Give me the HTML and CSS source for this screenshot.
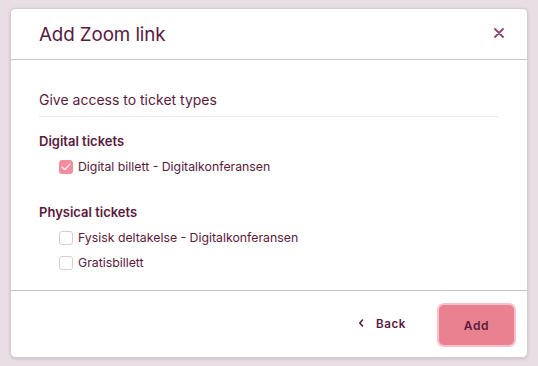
FILE: index.html
```html
<!DOCTYPE html>
<html>
<head>
<meta charset="utf-8">
<link rel="stylesheet" href="styles.css">
</head>
<body>
<div class="backdrop">
  <div class="modal">
    <div class="modal-header">
      <h1 class="title">Add Zoom link</h1>
      <button class="close" aria-label="Close">
        <svg width="10" height="10" viewBox="0 0 10 10"><path d="M1 1L9 9M9 1L1 9" stroke="#8a4571" stroke-width="1.8" stroke-linecap="round"/></svg>
      </button>
    </div>
    <div class="modal-body">
      <div class="section-title">Give access to ticket types</div>
      <div class="group">
        <div class="group-title">Digital tickets</div>
        <label class="option">
          <span class="box checked">
            <svg width="10" height="8" viewBox="0 0 10 8"><path d="M1 4.2L3.8 6.6L9 1.2" fill="none" stroke="#fff" stroke-width="1.2" stroke-linecap="round" stroke-linejoin="round"/></svg>
          </span>
          <span>Digital billett - Digitalkonferansen</span>
        </label>
      </div>
      <div class="group group-2">
        <div class="group-title">Physical tickets</div>
        <label class="option">
          <span class="box"></span>
          <span>Fysisk deltakelse - Digitalkonferansen</span>
        </label>
        <label class="option">
          <span class="box"></span>
          <span>Gratisbillett</span>
        </label>
      </div>
    </div>
    <div class="modal-footer">
      <button class="back">
        <svg width="6" height="8" viewBox="0 0 6 8"><path d="M4.5 1L1.8 4L4.5 7" fill="none" stroke="#5a1a3e" stroke-width="1.6" stroke-linecap="round" stroke-linejoin="round"/></svg>
        <span>Back</span>
      </button>
      <button class="add">Add</button>
    </div>
  </div>
</div>
</body>
</html>
```
FILE: styles.css
```css
* { box-sizing: border-box; }
html, body { margin: 0; padding: 0; }
body {
  width: 538px;
  height: 366px;
  overflow: hidden;
  background: #e8dee4;
  font-family: Inter, "Noto Sans", sans-serif;
  color: #5a1a3e;
}
.backdrop {
  padding: 8px 10px;
}
.modal {
  width: 518px;
  height: 350px;
  background: #fff;
  border-radius: 5px;
  border: 1px solid #d2cbcf;
  box-shadow: 0 1px 3px rgba(90, 40, 70, 0.18);
  display: flex;
  flex-direction: column;
}
.modal-header {
  height: 51px;
  border-bottom: 1px solid #c9c5c7;
  display: flex;
  align-items: center;
  justify-content: space-between;
  padding: 0 22px 0 28px;
}
.title {
  margin: 0;
  font-size: 18.8px;
  font-weight: 400;
  letter-spacing: -0.1px;
  color: #5a1a3e;
  padding-top: 1px;
}
.close {
  border: 0;
  background: none;
  padding: 0;
  width: 12px;
  height: 12px;
  display: flex;
  align-items: center;
  justify-content: center;
  margin-top: -3px;
}
.modal-body {
  flex: 1;
  padding: 31px 28px 0 28px;
  border-bottom: 1px solid #c9c5c7;
}
.section-title {
  font-size: 14px;
  font-weight: 400;
  padding-bottom: 8px;
  border-bottom: 1px solid #ececec;
  margin-bottom: 15px;
}
.group-title {
  font-size: 13px;
  font-weight: 600;
  line-height: 18px;
  margin-bottom: 8px;
}
.group-2 { margin-top: 27px; }
.option {
  display: flex;
  align-items: center;
  gap: 5px;
  padding-left: 20px;
  font-size: 12.3px;
  line-height: 18px;
  height: 18px;
  margin-bottom: 7px;
}
.box {
  width: 14px;
  height: 14px;
  border: 1px solid #d8ccd3;
  border-radius: 3px;
  background: #fff;
  display: flex;
  align-items: center;
  justify-content: center;
}
.box.checked {
  background: #f38c9c;
  border-color: #f38c9c;
}
.modal-footer {
  height: 66px;
  display: flex;
  align-items: center;
  justify-content: flex-end;
  padding: 0 13px 0 0;
  gap: 33px;
}
.back {
  border: 0;
  background: none;
  display: flex;
  align-items: center;
  gap: 12px;
  font-family: inherit;
  font-size: 11.6px;
  font-weight: 600;
  letter-spacing: 0.6px;
  color: #5a1a3e;
  padding: 0;
}
.back svg { margin-top: -3px; }
.add {
  width: 75px;
  height: 40px;
  border: 0;
  border-radius: 5px;
  background: #ea8190;
  box-shadow: 0 0 0 2px #f9c0c9;
  font-family: inherit;
  font-size: 12px;
  font-weight: 600;
  letter-spacing: 0.6px;
  color: #5a1a3e;
  margin-top: 2px;
}
```
